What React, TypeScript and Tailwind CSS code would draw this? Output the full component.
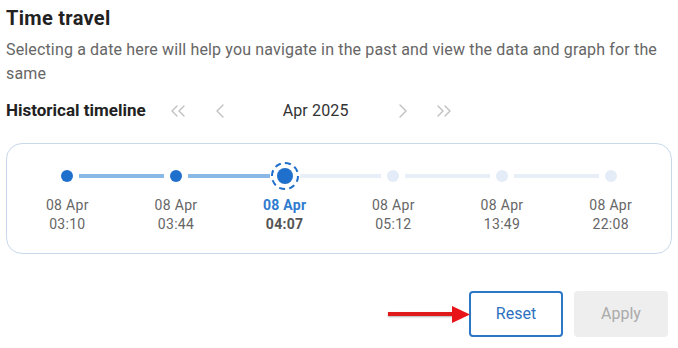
import { ChevronLeft, ChevronRight, ChevronsLeft, ChevronsRight } from 'lucide-react'

type Point = { date: string; time: string; state: 'past' | 'selected' | 'future' }

const points: Point[] = [
  { date: '08 Apr', time: '03:10', state: 'past' },
  { date: '08 Apr', time: '03:44', state: 'past' },
  { date: '08 Apr', time: '04:07', state: 'selected' },
  { date: '08 Apr', time: '05:12', state: 'future' },
  { date: '08 Apr', time: '13:49', state: 'future' },
  { date: '08 Apr', time: '22:08', state: 'future' },
]

function Dot({ state }: { state: Point['state'] }) {
  if (state === 'selected') {
    return (
      <div className="mx-[1px] flex h-[28px] w-[28px] shrink-0 items-center justify-center rounded-full border-2 border-dashed border-[#1f6fcc]">
        <div className="h-[16px] w-[16px] rounded-full bg-[#1f6fcc]" />
      </div>
    )
  }
  return (
    <div
      className={`mx-[6px] h-[12px] w-[12px] shrink-0 rounded-full ${
        state === 'past' ? 'bg-[#1f6fcc]' : 'bg-[#e4ecf7]'
      }`}
    />
  )
}

export default function App() {
  return (
    <div className="h-[348px] w-[678px] bg-white px-[6px] font-['Roboto',sans-serif]">
      <h1 className="pt-[5px] text-[20px] font-bold leading-[26px] tracking-[0.3px] text-[#222]">Time travel</h1>
      <p className="mt-[7px] text-[16px] leading-[24px] tracking-[0.15px] text-[#666]">
        Selecting a date here will help you navigate in the past and view the data and graph for the same
      </p>

      <div className="mt-[13px] flex h-[24px] items-center text-[16px]">
        <span className="text-[17px] font-bold text-[#222]">Historical timeline</span>
        <ChevronsLeft size={24} strokeWidth={1.4} className="ml-[20px] text-[#c0c0c0]" />
        <ChevronLeft size={24} strokeWidth={1.4} className="ml-[18px] text-[#c0c0c0]" />
        <span className="ml-[51px] tracking-[0.15px] text-[#333]">Apr 2025</span>
        <ChevronRight size={24} strokeWidth={1.4} className="ml-[42px] text-[#c0c0c0]" />
        <ChevronsRight size={24} strokeWidth={1.4} className="ml-[17px] text-[#c0c0c0]" />
      </div>

      <div className="mt-[20px] rounded-[16px] border border-[#c9d8ea] px-[6px] pb-[19px] pt-[18px]">
        <div className="grid grid-cols-6">
          {points.map((p, i) => {
            const leftColor =
              i === 0 ? 'bg-transparent' : p.state === 'future' ? 'bg-[#e8eff8]' : 'bg-[#8ab8e6]'
            const rightColor =
              i === points.length - 1
                ? 'bg-transparent'
                : p.state === 'past'
                ? 'bg-[#8ab8e6]'
                : 'bg-[#e8eff8]'
            return (
              <div key={i} className="flex flex-col items-center">
                <div className="flex h-[28px] w-full items-center">
                  <div className={`h-[4px] flex-1 ${leftColor}`} />
                  <Dot state={p.state} />
                  <div className={`h-[4px] flex-1 ${rightColor}`} />
                </div>
                <div
                  className={`mt-[6px] text-[14px] leading-[19px] tracking-[0.3px] ${
                    p.state === 'selected' ? 'font-bold text-[#2f7bd0]' : 'text-[#666]'
                  }`}
                >
                  {p.date}
                </div>
                <div
                  className={`text-[14px] leading-[19px] tracking-[0.3px] ${
                    p.state === 'selected' ? 'font-bold text-[#555]' : 'text-[#666]'
                  }`}
                >
                  {p.time}
                </div>
              </div>
            )
          })}
        </div>
      </div>

      <div className="mt-[37px] flex items-center justify-end pr-[4px]">
        <div className="relative mr-[-1px] flex h-[16px] w-[82px] items-center">
          <div className="h-[4px] flex-1 bg-[#e01a1a] shadow-[0_1px_2px_rgba(0,0,0,0.3)]" />
          <svg width="18" height="17" viewBox="0 0 18 17" className="-ml-[2px]">
            <polygon points="0,0 18,8.5 0,17" fill="#e8141a" />
          </svg>
        </div>
        <button className="h-[46px] w-[94px] rounded-[4px] border-2 border-[#2d78c6] text-[16px] text-[#2d72c0]">
          Reset
        </button>
        <button className="ml-[11px] h-[46px] w-[94px] rounded-[4px] bg-[#eeeeee] text-[16px] text-[#aaaaaa]">
          Apply
        </button>
      </div>
    </div>
  )
}
